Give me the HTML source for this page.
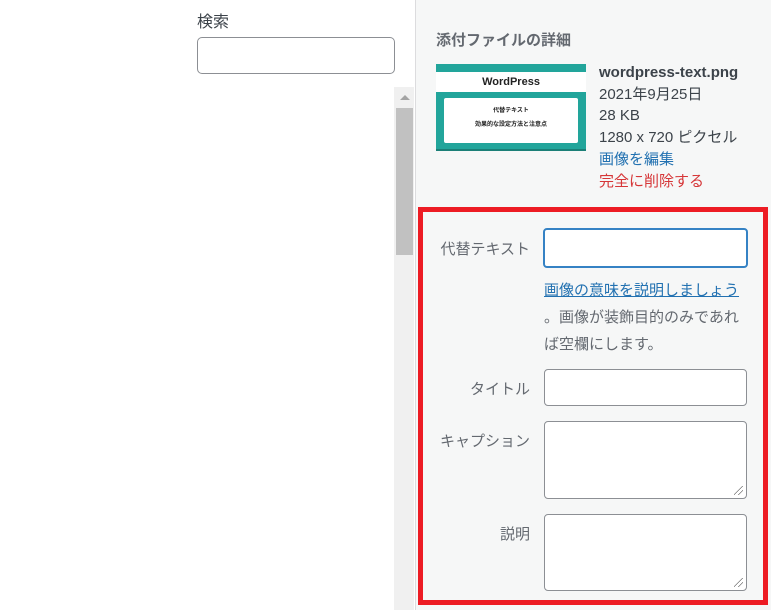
<!DOCTYPE html>
<html><head><meta charset="utf-8"><style>
*{box-sizing:border-box;margin:0;padding:0}
body{width:771px;height:610px;overflow:hidden;background:#fff;font-family:"Liberation Sans","Noto Sans CJK JP",sans-serif;position:relative;color:#3c434a}
.a{position:absolute}
.lbl{position:absolute;font-size:15px;color:#646970;text-align:right;width:120px;left:410px}
.in{position:absolute;background:#fff;border:1px solid #8c8f94;border-radius:4px}
.grip{position:absolute;right:3px;bottom:3px;width:9px;height:9px;background:linear-gradient(135deg,transparent 45%,#777 45%,#777 52%,transparent 52%,transparent 70%,#777 70%,#777 77%,transparent 77%)}
</style></head><body>
<div class="a" style="left:197px;top:8px;font-size:16px;color:#3c434a">検索</div>
<div class="in" style="left:197px;top:37px;width:198px;height:37px;border-radius:5px"></div>
<div class="a" style="left:394px;top:87px;width:20px;height:523px;background:#f0f0f0"></div>
<div class="a" style="left:396px;top:108px;width:17px;height:147px;background:#c1c1c1"></div>
<div class="a" style="left:400px;top:95px;width:0;height:0;border-left:5px solid transparent;border-right:5px solid transparent;border-bottom:5px solid #a3a3a3"></div>
<div class="a" style="left:415px;top:0;width:356px;height:610px;background:#f6f7f7;border-left:1px solid #dcdcde"></div>
<div class="a" style="left:436px;top:29px;font-size:15px;font-weight:bold;color:#646970">添付ファイルの詳細</div>
<div class="a" style="left:436px;top:64px;width:150px;height:87px;background:#22a59b;border-bottom:2px solid #1b7f77">
 <div class="a" style="left:0;top:8px;width:150px;height:20px;background:#fff;font-size:11px;font-weight:bold;color:#222;text-align:center;line-height:20px">WordPress</div>
 <div class="a" style="left:8px;top:34px;width:134px;height:45px;background:#fff;border-radius:2px;font-size:6px;font-weight:bold;text-align:center;color:#222;line-height:14px;padding-top:6px">代替テキスト<br>効果的な設定方法と注意点</div>
</div>
<div class="a" style="left:599px;top:62px;font-size:15px;line-height:21.7px;color:#3c434a">
 <div style="font-weight:bold">wordpress-text.png</div>
 <div>2021年9月25日</div>
 <div>28 KB</div>
 <div>1280 x 720 ピクセル</div>
 <div style="color:#2271b1">画像を編集</div>
 <div style="color:#d63638">完全に削除する</div>
</div>
<div class="a" style="left:418px;top:207px;width:350px;height:398px;border:5px solid #ed1c24"></div>
<div class="lbl" style="top:238px">代替テキスト</div>
<div class="in" style="left:543px;top:228px;width:205px;height:40px;border:2px solid #3582c4"></div>
<div class="a" style="left:544px;top:277px;font-size:15px;line-height:27px;color:#646970;width:205px">
 <span style="color:#2271b1;text-decoration:underline">画像の意味を説明しましょう</span><br>。画像が装飾目的のみであれ<br>ば空欄にします。</div>
<div class="lbl" style="top:378px">タイトル</div>
<div class="in" style="left:544px;top:369px;width:203px;height:37px"></div>
<div class="lbl" style="top:430px">キャプション</div>
<div class="in" style="left:544px;top:421px;width:203px;height:78px"><div class="grip"></div></div>
<div class="lbl" style="top:523px">説明</div>
<div class="in" style="left:544px;top:514px;width:203px;height:77px"><div class="grip"></div></div>
</body></html>
